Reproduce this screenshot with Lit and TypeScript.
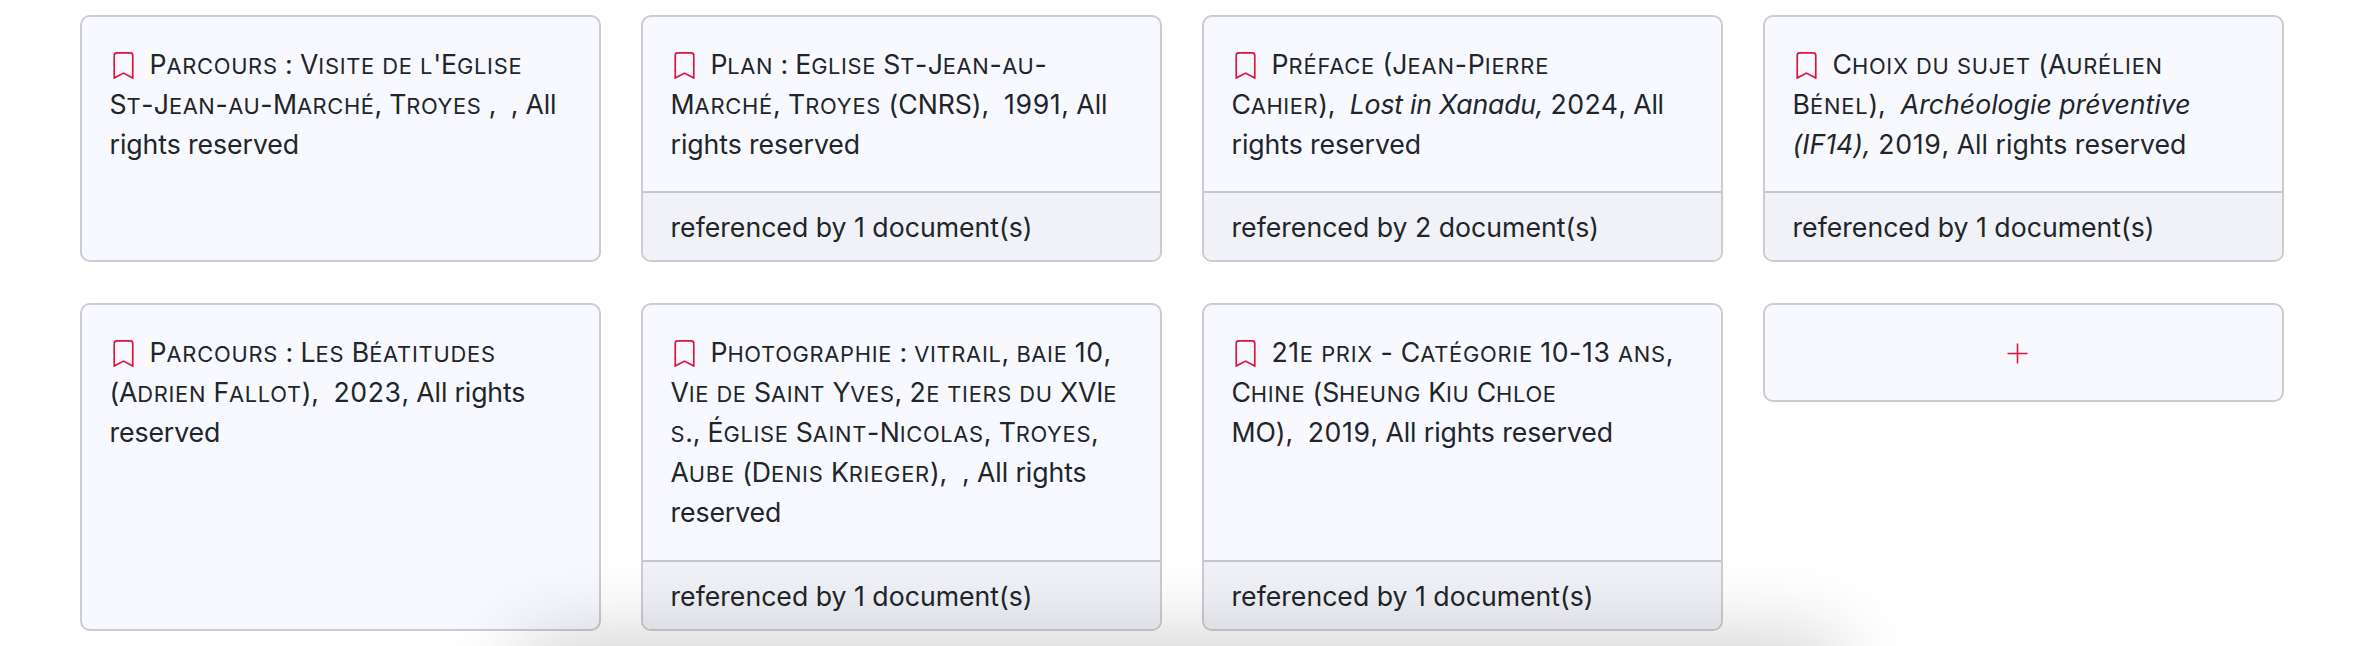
import { LitElement, html, css } from "lit";
import { customElement, property } from "lit/decorators.js";
import { styleMap } from "lit/directives/style-map.js";

type Run = { t: string; k: "sc" | "n" | "i" };
type Line = { track: number; runs: Run[] };

interface Doc {
  lines: Line[];
  refs?: number;
}

const sc = (t: string): Run => ({ t, k: "sc" });
const n = (t: string): Run => ({ t, k: "n" });
const i = (t: string): Run => ({ t, k: "i" });
const line = (track: number, ...runs: Run[]): Line => ({ track, runs });

const DOCS: Doc[] = [
  { lines: [line(-0.11, sc("Parcours : Visite de l'Eglise")), line(-0.21, sc("St-Jean-au-Marché, Troyes ,"), n("\u00a0 , All")), line(-0.07, n("rights reserved"))] },
  { lines: [line(-0.19, sc("Plan : Eglise St-Jean-au-")), line(-0.05, sc("Marché, Troyes (CNRS),"), n("\u00a0 1991, All")), line(-0.07, n("rights reserved"))], refs: 1 },
  { lines: [line(0, sc("Préface (Jean-Pierre")), line(-0.22, sc("Cahier),"), n("\u00a0 "), i("Lost in Xanadu,"), n(" 2024, All")), line(-0.07, n("rights reserved"))], refs: 2 },
  { lines: [line(-0.08, sc("Choix du sujet (Aurélien")), line(0, sc("Bénel),"), n("\u00a0 "), i("Archéologie préventive")), line(0.02, i("(IF14),"), n(" 2019, All rights reserved"))], refs: 1 },
  { lines: [line(-0.06, sc("Parcours : Les Béatitudes")), line(-0.15, sc("(Adrien Fallot),"), n("\u00a0 2023, All rights")), line(-0.1, n("reserved"))] },
  { lines: [line(-0.15, sc("Photographie : vitrail, baie 10,")), line(-0.17, sc("Vie de Saint Yves, 2e tiers du XVIe")), line(-0.16, sc("s., Église Saint-Nicolas, Troyes,")), line(-0.08, sc("Aube (Denis Krieger),"), n("\u00a0 , All rights")), line(-0.1, n("reserved"))], refs: 1 },
  { lines: [line(-0.07, sc("21e prix - Catégorie 10-13 ans,")), line(-0.16, sc("Chine (Sheung Kiu Chloe")), line(-0.1, sc("MO),"), n("\u00a0 2019, All rights reserved"))], refs: 1 },
];

@customElement("doc-card")
class DocCard extends LitElement {
  @property({ attribute: false }) doc!: Doc;

  static styles = css`
    :host { display: flex; flex-direction: column; box-sizing: border-box; border: 2px solid #cbcbd1; border-radius: 10px; background: #f8f9ff; overflow: hidden; }
    .body { flex: 1; padding: 27px 27.5px; white-space: nowrap; }
    .line { display: block; height: 40px; line-height: 40px; white-space: pre; letter-spacing: var(--track); }
    .icon { width: 27px; height: 27px; vertical-align: -5px; margin-right: 13px; fill: #dc143c; }
    .small { font-size: 0.82em; text-transform: uppercase; letter-spacing: calc(0.038em + var(--track)); }
    .digits { letter-spacing: calc(0.025em + var(--track)); }
    .italic { font-style: italic; }
    .footer { border-top: 2px solid #c6c6cc; background: #f1f2f7; padding: 14px 27.5px 13px; line-height: 40px; }
  `;

  // Number groups get slightly looser tracking.
  private digits(t: string) {
    return t.split(/([\d-]+)/).map((p, k) => (k % 2 ? html`<span class="digits">${p}</span>` : p));
  }

  // Lowercase runs become reduced capitals; everything else keeps full size.
  private caps(t: string) {
    return t.split(/([a-zà-ÿ]+)/).map((p, k) => (k % 2 ? html`<span class="small">${p}</span>` : this.digits(p)));
  }

  render() {
    return html`<div class="body">${this.doc.lines.map((l, k) => html`<span class="line" style=${styleMap({ "--track": `${l.track}px` })}>${k === 0
        ? html`<svg class="icon" viewBox="0 0 16 16"><path d="M2 2a2 2 0 0 1 2-2h8a2 2 0 0 1 2 2v13.5a.5.5 0 0 1-.777.416L8 13.101l-5.223 2.815A.5.5 0 0 1 2 15.5zm2-1a1 1 0 0 0-1 1v12.566l4.723-2.482a.5.5 0 0 1 .554 0L13 14.566V2a1 1 0 0 0-1-1z"/></svg>`
        : ""}${l.runs.map((r) => r.k === "sc" ? this.caps(r.t) : r.k === "i" ? html`<span class="italic">${r.t}</span>` : this.digits(r.t))}</span>`)}</div>
      ${this.doc.refs ? html`<div class="footer">referenced by ${this.doc.refs} document(s)</div>` : ""}`;
  }
}

@customElement("app-root")
class AppRoot extends LitElement {
  static styles = css`
    :host { display: block; position: relative; width: 2358px; height: 646px; overflow: hidden; background: #fff; color: #212529; font-family: Inter, sans-serif; font-size: 26.667px; }
    .grid { display: grid; grid-template-columns: repeat(4, 521px); column-gap: 40px; grid-template-rows: 247px 328px; row-gap: 41px; padding: 15px 74px 0 80px; }
    .add { box-sizing: border-box; height: 99px; border: 2px solid #cbcbd1; border-radius: 10px; background: #f8f9ff; display: flex; align-items: center; justify-content: center; }
    .plus { width: 27px; height: 27px; fill: none; stroke: #dc143c; stroke-width: 1.6; margin: 2px 12px 0 0; }
    .shade { position: absolute; left: 520px; right: 520px; top: 655px; height: 120px; box-shadow: 0 -20px 80px rgba(0, 0, 0, 0.175); }
  `;

  render() {
    return html`<div class="grid">
        ${DOCS.map((d) => html`<doc-card .doc=${d}></doc-card>`)}
        <div class="add"><svg class="plus" viewBox="0 0 27 27"><path d="M13.5 3.5v20M3.5 13.5h20"/></svg></div>
      </div>
      <div class="shade"></div>`;
  }
}
